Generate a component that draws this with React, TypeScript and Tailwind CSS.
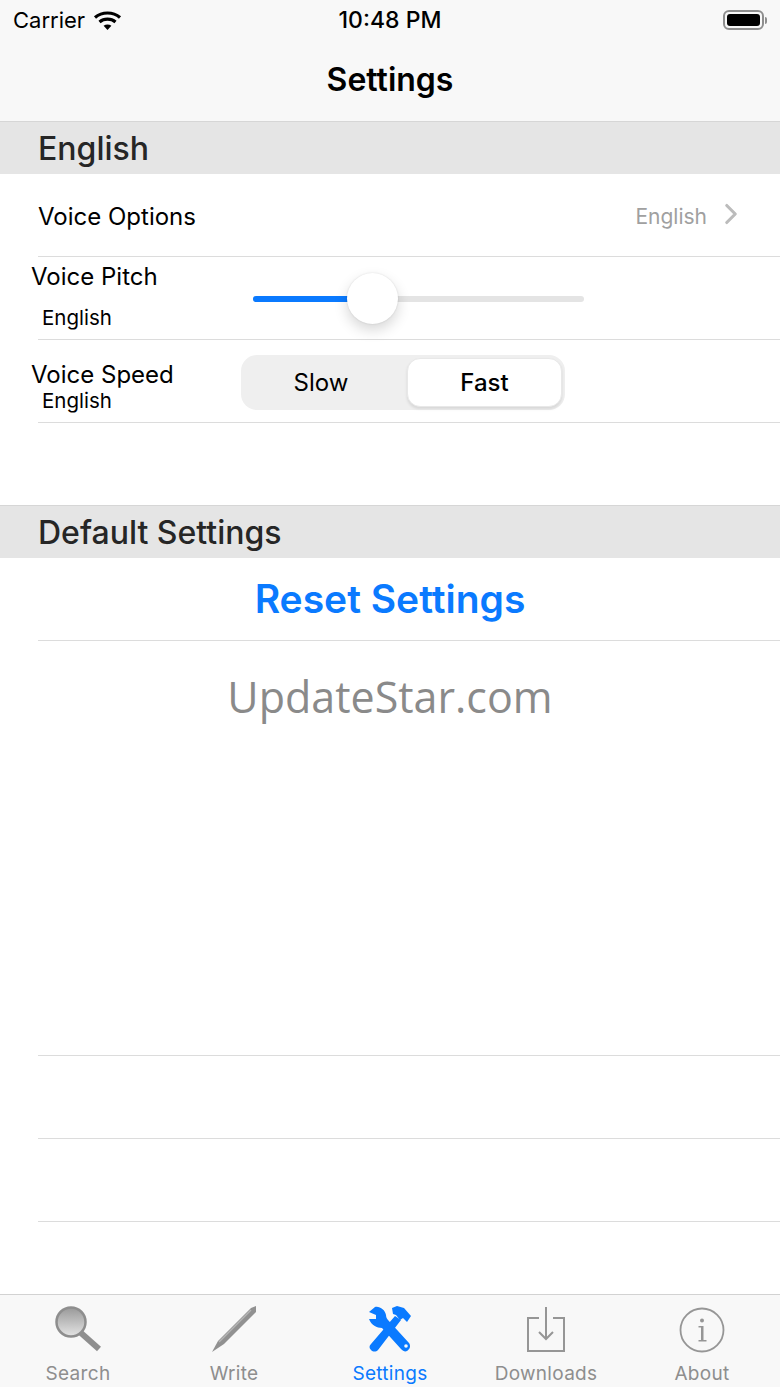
import { ChevronRight } from 'lucide-react'

const font = 'font-["Inter","Liberation_Sans",sans-serif]'

function WifiIcon() {
  return (
    <svg width="29" height="21" viewBox="0 0 29 21" fill="none" stroke="#000" strokeWidth="3.2">
      <path d="M2 7.500c7-6 18-6 25 0" />
      <path d="M6.500 12c4.500-3.800 11.500-3.800 16 0" />
      <path d="M14.500 20 10.600 15.800c2.200-1.700 5.600-1.700 7.800 0z" fill="#000" stroke="none" />
    </svg>
  )
}

function Row({ children, className = '' }: { children?: React.ReactNode; className?: string }) {
  return <div className={`h-[83px] ml-[38px] border-b border-[#dcdcdc] ${className}`}>{children}</div>
}

function SectionHeader({ title }: { title: string }) {
  return (
    <div className="h-[53px] bg-[#e5e5e5] border-t border-[#d6d6d6] pl-[38px] pt-[2px] flex items-center text-[32px] font-medium text-[#262626]">
      {title}
    </div>
  )
}

function SearchIcon() {
  return (
    <svg width="50" height="48" viewBox="0 0 50 48">
      <defs>
        <linearGradient id="glass" x1="0" y1="0" x2="0" y2="1">
          <stop offset="0" stopColor="#999" />
          <stop offset="1" stopColor="#e4e4e4" />
        </linearGradient>
      </defs>
      <circle cx="18" cy="17" r="14.500" fill="url(#glass)" stroke="#8e8e8e" strokeWidth="2.500" />
      <path d="M28 28 46 44" stroke="#8e8e8e" strokeWidth="6" />
    </svg>
  )
}

function WriteIcon() {
  return (
    <svg width="48" height="48" viewBox="0 0 48 48">
      <path d="M2 47 8 36 41 3 46 1 46 7 14 39z" fill="#919191" />
      <path d="M9 37 41 5" stroke="#b5b5b5" strokeWidth="1.500" />
    </svg>
  )
}

function SettingsIcon() {
  return (
    <svg width="44" height="48" viewBox="0 0 44 48" fill="#0a7aff">
      {/* wrench */}
      <path d="M7 2C12 1 17 5 18 10c0 2 1 4 2 5l21 23c2 3 1 6-2 8-2 1-4 0-6-2L14 23C9 23 3 20 1 14l7 0 0-4-7-3z" />
      {/* hammer head */}
      <path d="M24 3 29 1l7 2 7 8-4 6-4-4-3 2-4-5-3-1z" />
      {/* hammer handle */}
      <path d="M27 11 33 15 10 45c-2 2-5 2-7 0-2-2-2-4 0-6z" />
      <circle cx="38" cy="41" r="1.800" fill="#f9f9f9" />
    </svg>
  )
}

function DownloadsIcon() {
  return (
    <svg width="40" height="46" viewBox="0 0 40 46" fill="none" stroke="#969696" strokeWidth="2">
      <path d="M13 11H2v33h36V11H27" />
      <path d="M20 0v32" />
      <path d="M13 25l7 7 7-7" />
    </svg>
  )
}

function AboutIcon() {
  return (
    <svg width="46" height="46" viewBox="0 0 46 46" fill="none">
      <circle cx="23" cy="23" r="21.500" stroke="#969696" strokeWidth="1.800" />
      <circle cx="23" cy="13.500" r="2" fill="#969696" />
      <path d="M19.500 19h5v14h3v1.500h-8V33h2.500V20.500h-2.500z" fill="#969696" />
    </svg>
  )
}

function TabItem({ label, icon, active }: { label: string; icon: React.ReactNode; active?: boolean }) {
  return (
    <div className="flex-1 flex flex-col items-center">
      <div className="h-[58px] flex items-end justify-center">{icon}</div>
      <div className={`mt-[9px] text-[19px] leading-[23px] tracking-[0.3px] ${active ? 'text-[#0a7aff]' : 'text-[#8e8e8e]'}`}>{label}</div>
    </div>
  )
}

export default function App() {
  return (
    <div className={`relative w-[780px] h-[1387px] overflow-hidden bg-white text-black ${font}`}>
      {/* nav bar */}
      <div className="h-[121px] bg-[#f8f8f8]">
        <div className="h-[40px] px-[13px] flex items-center justify-between text-[22px]">
          <div className="flex items-center gap-[8px] w-[260px]">
            <span>Carrier</span>
            <WifiIcon />
          </div>
          <span className="text-[23px] font-medium">10:48 PM</span>
          <div className="w-[260px] flex justify-end items-center">
            <div className="w-[41px] h-[20px] rounded-[6px] border-2 border-[#8e8e8e] p-[2px]">
              <div className="w-full h-full rounded-[3px] bg-black" />
            </div>
            <div className="w-[2px] h-[7px] bg-[#8e8e8e] ml-[1px] rounded-r" />
          </div>
        </div>
        <div className="h-[80px] flex items-center justify-center text-[32px] font-semibold">Settings</div>
      </div>

      <SectionHeader title="English" />

      <Row className="flex items-center justify-between">
        <span className="text-[24px] pt-[3px]">Voice Options</span>
        <div className="flex items-center text-[21px] text-[#a0a0a0] pr-[32px] pt-[3px]">
          <span>English</span>
          <ChevronRight size={34} strokeWidth={2.200} className="ml-[7px] mb-[5px] text-[#bcbcbc]" />
        </div>
      </Row>

      <Row className="relative">
        <div className="absolute left-[-7px] top-[5px] text-[24px] leading-[29px]">Voice Pitch</div>
        <div className="absolute left-[4px] top-[49px] text-[20.500px] leading-[24px]">English</div>
        <div className="absolute left-[215px] top-[39px] w-[331px] h-[6px] rounded-full bg-[#e4e4e4]">
          <div className="w-[100px] h-full rounded-full bg-[#0a7aff]" />
          <div className="absolute left-[94px] top-[-23px] w-[51px] h-[51px] rounded-full bg-white shadow-[0_6px_14px_rgba(0,0,0,0.16),0_0_2px_rgba(0,0,0,0.12)]" />
        </div>
      </Row>

      <Row className="relative">
        <div className="absolute left-[-7px] top-[20px] text-[24px] leading-[29px]">Voice Speed</div>
        <div className="absolute left-[4px] top-[49px] text-[20.500px] leading-[24px]">English</div>
        <div className="absolute left-[203px] top-[15px] w-[324px] h-[55px] rounded-[16px] bg-[#efefef] p-[3px] flex">
          <div className="w-[154px] mr-[9px] flex items-center justify-center text-[24px]">Slow</div>
          <div className="flex-1 rounded-[13px] bg-white border border-[#e8e8e8] shadow-[0_2px_3px_rgba(0,0,0,0.1)] flex items-center justify-center text-[24px] font-medium">
            Fast
          </div>
        </div>
      </Row>

      <div className="h-[82px]" />

      <SectionHeader title="Default Settings" />

      <Row className="flex items-center justify-center pr-[38px] text-[39px] font-semibold text-[#0a7aff]">Reset Settings</Row>

      <div className="h-[112px] flex items-center justify-center text-[43px] text-[#8a8a8a]" style={{ fontFamily: '"Open Sans", sans-serif' }}>
        UpdateStar.com
      </div>

      <div className="h-[220px]" />
      <Row />
      <Row />
      <Row />

      {/* tab bar */}
      <div className="absolute left-0 right-0 bottom-0 h-[93px] bg-[#f8f8f8] border-t border-[#d2d2d2] flex">
        <TabItem label="Search" icon={<SearchIcon />} />
        <TabItem label="Write" icon={<WriteIcon />} />
        <TabItem label="Settings" icon={<SettingsIcon />} active />
        <TabItem label="Downloads" icon={<DownloadsIcon />} />
        <TabItem label="About" icon={<AboutIcon />} />
      </div>
    </div>
  )
}
